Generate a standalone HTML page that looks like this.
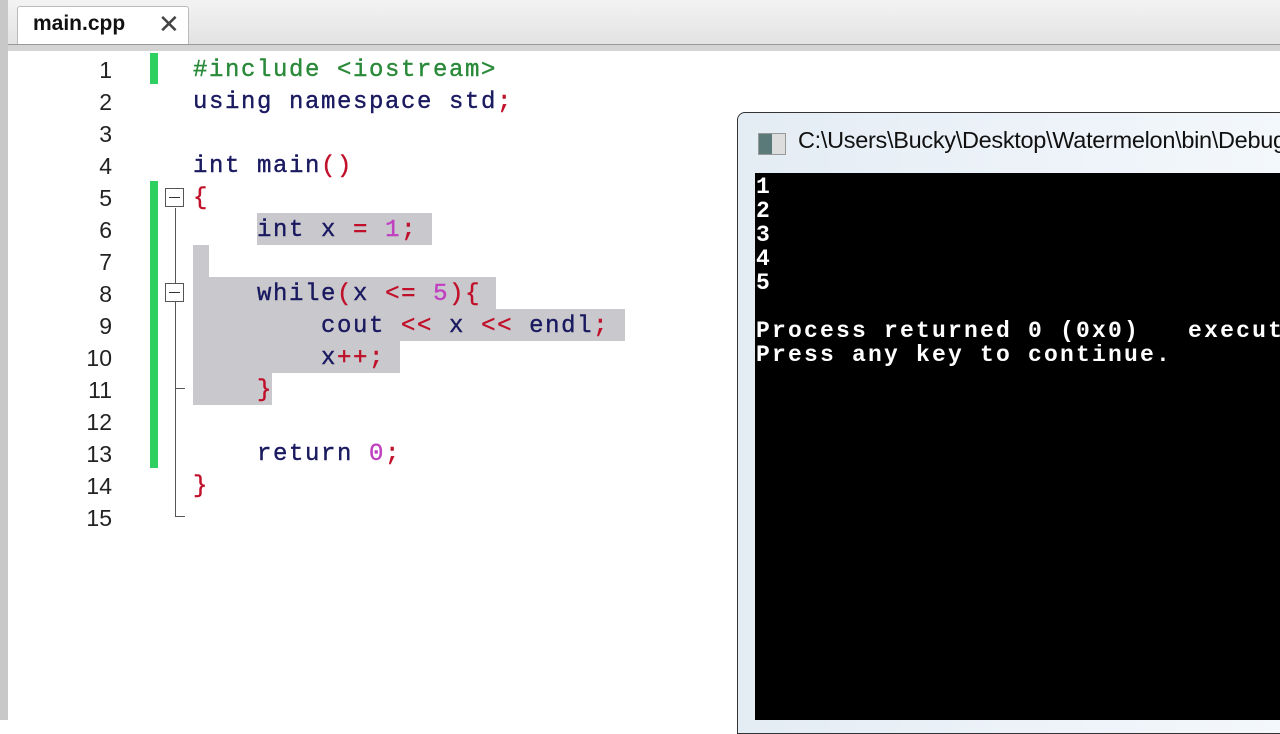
<!DOCTYPE html>
<html><head><style>
body{margin:0;width:1280px;height:720px;overflow:hidden;background:#fff;position:relative;font-family:"Liberation Sans",sans-serif}
.a{position:absolute}
.code{font-family:"Liberation Mono",monospace;font-size:24px;letter-spacing:1.6px;line-height:32px;white-space:pre;color:#1a1a60;-webkit-text-stroke:0.4px}
.ln{font-family:"Liberation Sans",sans-serif;font-size:23px;color:#222;width:60px;text-align:right;left:52px;line-height:32px}
.sel{background:#c9c8cd}
.r{color:#c0102a}.p{color:#c040c0}.g{color:#2a8a3a}
.con{font-family:"Liberation Mono",monospace;font-weight:bold;font-size:23px;letter-spacing:2.2px;line-height:24px;color:#fff;white-space:pre}
</style></head><body>
<div class="a" style="left:0;top:0;width:1280px;height:46px;background:linear-gradient(#f3f3f3,#e2e2e2)"></div>
<div class="a" style="left:0;top:0;width:8px;height:720px;background:#c8c8c8"></div>
<div class="a" style="left:17px;top:6px;width:170px;height:40px;background:#fff;border:1px solid #bbb;border-bottom:none;border-radius:3px 3px 0 0"></div>
<div class="a" style="left:33px;top:12px;font-size:21px;font-weight:bold;color:#111">main.cpp</div>
<div class="a" style="left:158px;top:9px;font-size:26px;color:#444">✕</div>
<div class="a" style="left:8px;top:44px;width:1272px;height:6px;background:#d4d4d4;border-top:1px solid #999"></div>
<div class="a" style="left:150px;top:53px;width:8px;height:31px;background:#2ed060"></div>
<div class="a" style="left:150px;top:181px;width:8px;height:287px;background:#2ed060"></div>
<div class="a" style="left:165px;top:188px;width:19px;height:19px;border:1px solid #555;box-sizing:border-box;background:#fff"></div>
<div class="a" style="left:169px;top:197px;width:11px;height:1px;background:#333"></div>
<div class="a" style="left:175px;top:208px;width:1px;height:308px;background:#555"></div>
<div class="a" style="left:165px;top:283px;width:19px;height:19px;border:1px solid #555;box-sizing:border-box;background:#fff"></div>
<div class="a" style="left:169px;top:292px;width:11px;height:1px;background:#333"></div>
<div class="a" style="left:175px;top:388px;width:10px;height:1px;background:#555"></div>
<div class="a" style="left:175px;top:516px;width:10px;height:1px;background:#555"></div>
<div class="a sel" style="left:257px;top:213px;width:175px;height:32px"></div>
<div class="a sel" style="left:193px;top:245px;width:16px;height:32px"></div>
<div class="a sel" style="left:193px;top:277px;width:303px;height:32px"></div>
<div class="a sel" style="left:193px;top:309px;width:432px;height:32px"></div>
<div class="a sel" style="left:193px;top:341px;width:207px;height:32px"></div>
<div class="a sel" style="left:193px;top:373px;width:79px;height:32px"></div>
<div class="a ln" style="top:54px">1<br>2<br>3<br>4<br>5<br>6<br>7<br>8<br>9<br>10<br>11<br>12<br>13<br>14<br>15</div>
<div class="a code" style="left:193px;top:55px"><span class="g">#include &lt;iostream&gt;</span>
using namespace std<span class="r">;</span>

int main<span class="r">()</span>
<span class="r">{</span>
    int x <span class="r">=</span> <span class="p">1</span><span class="r">;</span>

    while<span class="r">(</span>x <span class="r">&lt;=</span> <span class="p">5</span><span class="r">){</span>
        cout <span class="r">&lt;&lt;</span> x <span class="r">&lt;&lt;</span> endl<span class="r">;</span>
        x<span class="r">++;</span>
    <span class="r">}</span>

    return <span class="p">0</span><span class="r">;</span>
<span class="r">}</span></div>
<div class="a" style="left:737px;top:112px;width:560px;height:620px;background:linear-gradient(90deg,#e4ecf4,#f4f8fc);border:1px solid #333;border-radius:8px 0 0 0"></div>
<div class="a" style="left:758px;top:133px;width:26px;height:20px;background:linear-gradient(90deg,#5a7a7a 50%,#ddd 50%);border:1px solid #999"></div>
<div class="a" style="left:798px;top:127px;font-size:23.5px;letter-spacing:-0.3px;color:#111;white-space:nowrap">C:\Users\Bucky\Desktop\Watermelon\bin\Debug</div>
<div class="a" style="left:755px;top:173px;width:525px;height:547px;background:#000"></div>
<div class="a con" style="left:756px;top:175px">1
2
3
4
5

Process returned 0 (0x0)   execution
Press any key to continue.</div>
</body></html>
